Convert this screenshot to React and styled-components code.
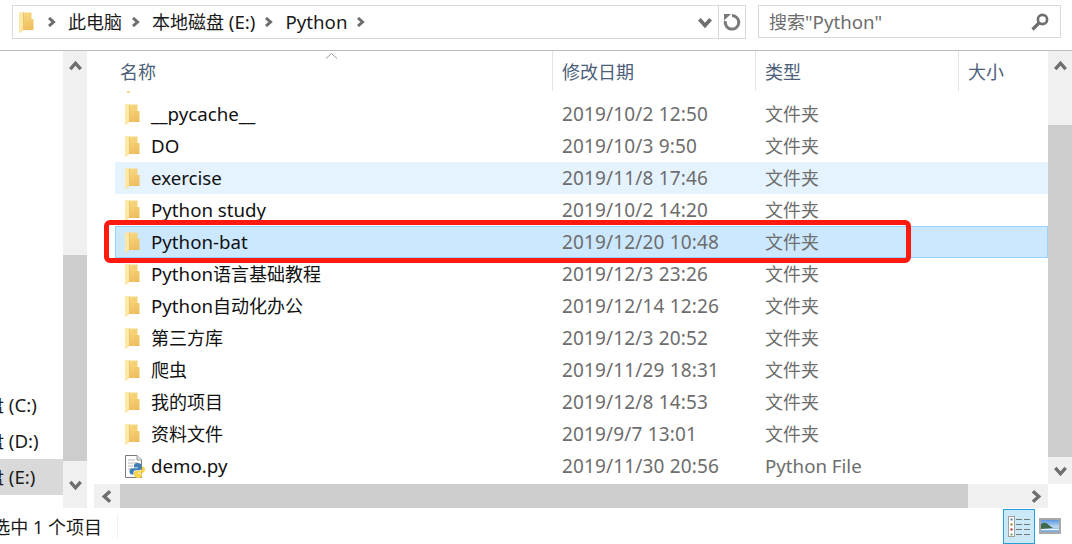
import React from 'react'
import styled, { createGlobalStyle } from 'styled-components'

const Global = createGlobalStyle`
  html, body {
    margin: 0;
    padding: 0;
    background: #fff;
  }
`

const FONT = `"Noto Sans", "Noto Sans CJK SC", sans-serif`

const Window = styled.div`
  width: 1072px;
  height: 544px;
  display: flex;
  flex-direction: column;
  overflow: hidden;
  position: relative;
  background: #fff;
  font-family: ${FONT};
  font-size: 18px;
  color: #1a1a1a;
`

const Latin = styled.span`
  font-size: 18.7px;
`

const TopBar = styled.div`
  height: 51px;
  flex: none;
  box-sizing: border-box;
  border-bottom: 1px solid #bdbdbd;
  display: flex;
  align-items: flex-start;
  padding: 5px 11px 0 12px;
  gap: 12px;
`

const AddressBox = styled.div`
  width: 734px;
  height: 34px;
  box-sizing: border-box;
  border: 1px solid #d9d9d9;
  display: flex;
  align-items: center;
`

const Crumbs = styled.div`
  flex: 1;
  display: flex;
  align-items: center;
  padding-left: 6px;
`

const CrumbIcon = styled.span`
  display: flex;
  margin-right: 12px;
`

const CrumbText = styled.span`
  margin: -1px 8px 0 12px;
  white-space: nowrap;
  line-height: 24px;
`

const Dropdown = styled.div`
  width: 26px;
  height: 32px;
  display: flex;
  align-items: center;
  justify-content: center;
`

const Refresh = styled.div`
  width: 27px;
  height: 32px;
  border-left: 1px solid #d9d9d9;
  box-sizing: border-box;
  display: flex;
  align-items: center;
  justify-content: center;
`

const SearchBox = styled.div`
  width: 303px;
  height: 33px;
  box-sizing: border-box;
  border: 1px solid #d9d9d9;
  display: flex;
  align-items: center;
  justify-content: space-between;
  padding: 0 11px 0 10px;
  color: #6d6d6d;
`

const SearchText = styled.span`
  margin-top: -2px;
`

const Middle = styled.div`
  flex: 1;
  min-height: 0;
  display: flex;
  align-items: flex-start;
`

const NavPane = styled.div`
  width: 94px;
  height: 100%;
  flex: none;
  display: flex;
  box-sizing: border-box;
  padding-right: 7px;
`

const NavList = styled.div`
  width: 63px;
  flex: none;
  display: flex;
  flex-direction: column;
  justify-content: flex-end;
  padding-bottom: 13px;
  overflow: hidden;
`

const NavRow = styled.div`
  height: 36px;
  flex: none;
  display: flex;
  align-items: center;
  padding-bottom: 2px;
  box-sizing: border-box;
  white-space: pre;
  background: ${(p) => (p.$active ? '#d9d9d9' : 'transparent')};
`

// the tree is scrolled sideways, so only the end of each label shows
const NavLabel = styled.span`
  margin-left: -68px;
`

const VScroll = styled.div`
  width: ${(p) => p.$w}px;
  height: ${(p) => (p.$h ? `${p.$h}px` : '100%')};
  flex: none;
  display: flex;
  flex-direction: column;
  background: #f0f0f0;
`

const ScrollBtn = styled.div`
  height: ${(p) => p.$h}px;
  flex: none;
  display: flex;
  align-items: center;
  justify-content: center;
`

const ScrollThumb = styled.div`
  flex: ${(p) => (p.$grow ? 1 : 'none')};
  height: ${(p) => (p.$h ? `${p.$h}px` : 'auto')};
  background: ${(p) => (p.$clear ? 'transparent' : '#cdcdcd')};
`

const FilePane = styled.div`
  width: 954px;
  height: 100%;
  flex: none;
  display: flex;
  flex-direction: column;
`

const ListArea = styled.div`
  flex: 1;
  min-height: 0;
  display: flex;
  flex-direction: column;
  overflow: hidden;
`

const Header = styled.div`
  height: 40px;
  flex: none;
  display: flex;
  position: relative;
  color: #4c607a;
`

const HeadCell = styled.div`
  width: ${(p) => p.$w}px;
  flex: none;
  box-sizing: border-box;
  padding-left: ${(p) => p.$pad}px;
  border-right: ${(p) => (p.$noline ? '0' : '1px solid #e5e5e5')};
  display: flex;
  align-items: center;
`

const SortCaret = styled.svg`
  position: absolute;
  left: 231px;
  top: 1px;
`

const Rows = styled.div`
  padding-left: 21px;
`

const Sliver = styled.div`
  height: 7px;
  padding-left: 12px;
`

const SliverTip = styled.div`
  width: 3px;
  height: 2px;
  background: #f6d98c;
`

const Row = styled.div`
  height: 32px;
  box-sizing: border-box;
  display: grid;
  grid-template-columns: 26px 411px 203px 1fr;
  align-items: center;
  padding-left: 10px;
  background: ${(p) => (p.$state === 'selected' ? '#cce8ff' : p.$state === 'hover' ? '#e5f3ff' : 'transparent')};
  box-shadow: ${(p) => (p.$state === 'selected' ? 'inset 0 0 0 1px #99d1ff' : 'none')};
`

const RowName = styled.span`
  white-space: pre;
  color: #111;
  margin-top: -2px;
`

const RowDate = styled.span`
  white-space: nowrap;
  color: #6d6d6d;
  font-size: 19px;
  letter-spacing: 0.15px;
  margin-top: -1px;
`

const RowType = styled.span`
  white-space: nowrap;
  color: #6d6d6d;
  margin-top: -2px;
`

const HScroll = styled.div`
  height: 24px;
  flex: none;
  display: flex;
  background: #f0f0f0;
`

const HButton = styled.div`
  width: 26px;
  flex: none;
  display: flex;
  align-items: center;
  justify-content: center;
`

const HThumb = styled.div`
  width: 848px;
  flex: none;
  background: #cdcdcd;
`

const HTrack = styled.div`
  flex: 1;
`

const StatusBar = styled.div`
  height: 36px;
  flex: none;
  display: flex;
  align-items: center;
`

const StatusText = styled.div`
  width: 118px;
  flex: none;
  height: 24px;
  display: flex;
  align-items: center;
  justify-content: flex-end;
  overflow: hidden;
  white-space: pre;
  padding-right: 15px;
  box-sizing: border-box;
  border-right: 1px solid #f0f0f0;
`

const ViewButtons = styled.div`
  margin-left: auto;
  display: flex;
  align-items: center;
  padding-right: 11px;
  gap: 4px;
`

const ViewBtn = styled.div`
  width: 32px;
  height: 35px;
  box-sizing: border-box;
  display: flex;
  align-items: center;
  justify-content: center;
  border: 1px solid #26a0da;
  background: #cbe8f6;
`

const RedFrame = styled.div`
  position: absolute;
  left: 104px;
  top: 220px;
  width: 807px;
  height: 43px;
  box-sizing: border-box;
  border: 5px solid #ff1a10;
  border-radius: 6px;
  pointer-events: none;
`

// latin runs are set a bit larger than the CJK runs, the original UI font is wider
const Mixed = ({ text }) =>
  text.split(/([\u4e00-\u9fff]+)/).map((part, i) =>
    /[\u4e00-\u9fff]/.test(part) || !part ? part : <Latin key={i}>{part}</Latin>
  )

const Folder = () => (
  <svg width="15" height="21" viewBox="0 0 15 21">
    <defs>
      <linearGradient id="fold" x1="0" y1="0" x2="0.3" y2="1">
        <stop offset="0" stopColor="#f9dc86" />
        <stop offset="1" stopColor="#eebd5c" />
      </linearGradient>
    </defs>
    <path d="M0 0.5 H12.5 V7 H14.5 V18 H4.5 L0 21 Z" fill="url(#fold)" />
    <path d="M0 1 L4.5 0.5 V17.5 L0 21 Z" fill="#fde8a8" />
    <path d="M4.5 0.5 V18" stroke="#e6bd62" strokeWidth="0.8" />
  </svg>
)

const PyFile = () => (
  <svg width="20" height="23" viewBox="0 0 20 23">
    <path d="M0.5 0.5 H12 L16.5 5 V22.5 H0.5 Z" fill="#fff" stroke="#7a7a7a" />
    <path d="M12 0.5 V5 H16.5" fill="#e6e6e6" stroke="#9a9a9a" />
    <path d="M3 5h7M3 8h10M3 11h5M3 14h4" stroke="#b5b5b5" />
    <path d="M13 8 C9.5 8 9 9.5 9 11 V12.5 H13 V13.3 H7.5 C5.5 13.3 4.5 14.6 4.5 16.5 C4.5 18.5 5.5 19.5 7 19.5 H8.5 V17.5 C8.5 16 9.5 15.3 11 15.3 H14 C15.5 15.3 16.5 14.2 16.5 13 V11 C16.5 9 15 8 13 8 Z" fill="#3f7fb5" />
    <path d="M13 23 C16.5 23 17 21.5 17 20 V18.5 H13 V17.7 H17.5 C19 17.7 20 16.5 20 14.5 C20 12.5 19 11.5 17.8 11.5 H17 V13.5 C17 15 16 15.8 14.5 15.8 H11.5 C10 15.8 9 16.8 9 18 V20 C9 22 11 23 13 23 Z" fill="#f7d44c" />
  </svg>
)

const Chev = ({ dir, size = 10, color = '#6e6e6e', width = 2.6 }) => {
  const paths = {
    right: 'M3 1 L7.5 5 L3 9',
    left: 'M7 1 L2.5 5 L7 9',
    up: 'M1 7 L5 2.5 L9 7',
    down: 'M1 3 L5 7.5 L9 3',
  }
  return (
    <svg width={size} height={size} viewBox="0 0 10 10">
      <path d={paths[dir]} fill="none" stroke={color} strokeWidth={width} />
    </svg>
  )
}

const RefreshIcon = () => (
  <svg width="18" height="18" viewBox="0 0 18 18">
    <path d="M9 2.5 A6.8 6.8 0 1 1 2.3 8" fill="none" stroke="#7a7a7a" strokeWidth="3" />
    <path d="M1 1 H8 L1 7.5 Z" fill="#7a7a7a" />
  </svg>
)

const SearchIcon = () => (
  <svg width="18" height="18" viewBox="0 0 18 18">
    <circle cx="11.5" cy="6.5" r="4.6" fill="none" stroke="#6e6e6e" strokeWidth="2.6" />
    <path d="M8 10 L1.5 16.5" stroke="#6e6e6e" strokeWidth="3.2" />
  </svg>
)

const DetailsIcon = () => (
  <svg width="22" height="21" viewBox="0 0 22 21">
    <rect x="0.5" y="0.5" width="6" height="20" fill="#fff" stroke="#a0a0a0" />
    <rect x="2.5" y="2.5" width="2" height="2" fill="#4f7fa0" />
    <rect x="2.5" y="7.5" width="2" height="2" fill="#8a7a20" />
    <rect x="2.5" y="12.5" width="2" height="2" fill="#b02020" />
    <rect x="2.5" y="17.5" width="2" height="2" fill="#7a9a70" />
    <path d="M8 3.5h6M16 3.5h6M8 8.5h6M16 8.5h6M8 13.5h6M16 13.5h6M8 18.5h6M16 18.5h6" stroke="#777" />
  </svg>
)

const PreviewIcon = () => (
  <svg width="22" height="16" viewBox="0 0 22 16">
    <defs>
      <linearGradient id="sky" x1="0" y1="0" x2="0" y2="1">
        <stop offset="0" stopColor="#4e8fe0" />
        <stop offset="0.55" stopColor="#bcd8f2" />
        <stop offset="1" stopColor="#6f9fd0" />
      </linearGradient>
    </defs>
    <rect x="1" y="1" width="20" height="14" fill="url(#sky)" stroke="#a8a8a8" strokeWidth="2" />
    <path d="M2 6 C6 3 9 6 11 8 L14 10 L2 11 Z" fill="#3f6a4f" />
    <path d="M2 11 H20 V12 H2 Z" fill="#e8f2fa" />
  </svg>
)

const navItems = [
  { label: '本地磁盘 (C:)' },
  { label: '本地磁盘 (D:)' },
  { label: '本地磁盘 (E:)', active: true },
]

const files = [
  { name: '__pycache__', date: '2019/10/2 12:50', type: '文件夹' },
  { name: 'DO', date: '2019/10/3 9:50', type: '文件夹' },
  { name: 'exercise', date: '2019/11/8 17:46', type: '文件夹', state: 'hover' },
  { name: 'Python study', date: '2019/10/2 14:20', type: '文件夹' },
  { name: 'Python-bat', date: '2019/12/20 10:48', type: '文件夹', state: 'selected' },
  { name: 'Python语言基础教程', date: '2019/12/3 23:26', type: '文件夹' },
  { name: 'Python自动化办公', date: '2019/12/14 12:26', type: '文件夹' },
  { name: '第三方库', date: '2019/12/3 20:52', type: '文件夹' },
  { name: '爬虫', date: '2019/11/29 18:31', type: '文件夹' },
  { name: '我的项目', date: '2019/12/8 14:53', type: '文件夹' },
  { name: '资料文件', date: '2019/9/7 13:01', type: '文件夹' },
  { name: 'demo.py', date: '2019/11/30 20:56', type: 'Python File', py: true },
]

const crumbs = ['此电脑', '本地磁盘 (E:)', 'Python']

export default function App() {
  return (
    <Window>
      <Global />
      <TopBar>
        <AddressBox>
          <Crumbs>
            <CrumbIcon><Folder /></CrumbIcon>
            <Chev dir="right" size={10} width={3} />
            {crumbs.map((c) => (
              <React.Fragment key={c}>
                <CrumbText><Mixed text={c} /></CrumbText>
                <Chev dir="right" size={10} width={3} />
              </React.Fragment>
            ))}
          </Crumbs>
          <Dropdown>
            <Chev dir="down" size={14} />
          </Dropdown>
          <Refresh>
            <RefreshIcon />
          </Refresh>
        </AddressBox>
        <SearchBox>
          <SearchText><Mixed text={'搜索"Python"'} /></SearchText>
          <SearchIcon />
        </SearchBox>
      </TopBar>
      <Middle>
        <NavPane>
          <NavList>
            {navItems.map((n) => (
              <NavRow key={n.label} $active={n.active}>
                <NavLabel><Mixed text={n.label} /></NavLabel>
              </NavRow>
            ))}
          </NavList>
          <VScroll $w={24}>
            <ScrollBtn $h={30}><Chev dir="up" size={13} /></ScrollBtn>
            <ScrollThumb $clear $h={174} />
            <ScrollThumb $grow />
            <ScrollBtn $h={47}><Chev dir="down" size={13} /></ScrollBtn>
          </VScroll>
        </NavPane>
        <FilePane>
          <ListArea>
            <Header>
              <HeadCell $w={459} $pad={26}>名称</HeadCell>
              <HeadCell $w={203} $pad={9}>修改日期</HeadCell>
              <HeadCell $w={203} $pad={9}>类型</HeadCell>
              <HeadCell $w={89} $pad={9} $noline>大小</HeadCell>
              <SortCaret width="13" height="8" viewBox="0 0 13 8">
                <path d="M1 6.5 L6.5 1.5 L12 6.5" fill="none" stroke="#9a9a9a" />
              </SortCaret>
            </Header>
            <Rows>
              <Sliver><SliverTip /></Sliver>
              {files.map((f) => (
                <Row key={f.name} $state={f.state}>
                  {f.py ? <PyFile /> : <Folder />}
                  <RowName><Mixed text={f.name} /></RowName>
                  <RowDate>{f.date}</RowDate>
                  <RowType><Mixed text={f.type} /></RowType>
                </Row>
              ))}
            </Rows>
          </ListArea>
          <HScroll>
            <HButton><Chev dir="left" size={13} /></HButton>
            <HThumb />
            <HTrack />
            <HButton><Chev dir="right" size={13} /></HButton>
          </HScroll>
        </FilePane>
        <VScroll $w={24} $h={433}>
          <ScrollBtn $h={30}><Chev dir="up" size={13} /></ScrollBtn>
          <ScrollThumb $clear $h={44} />
          <ScrollThumb $grow />
          <ScrollBtn $h={27}><Chev dir="down" size={13} /></ScrollBtn>
        </VScroll>
      </Middle>
      <StatusBar>
        <StatusText>选中 1 个项目</StatusText>
        <ViewButtons>
          <ViewBtn><DetailsIcon /></ViewBtn>
          <PreviewIcon />
        </ViewButtons>
      </StatusBar>
      <RedFrame />
    </Window>
  )
}
